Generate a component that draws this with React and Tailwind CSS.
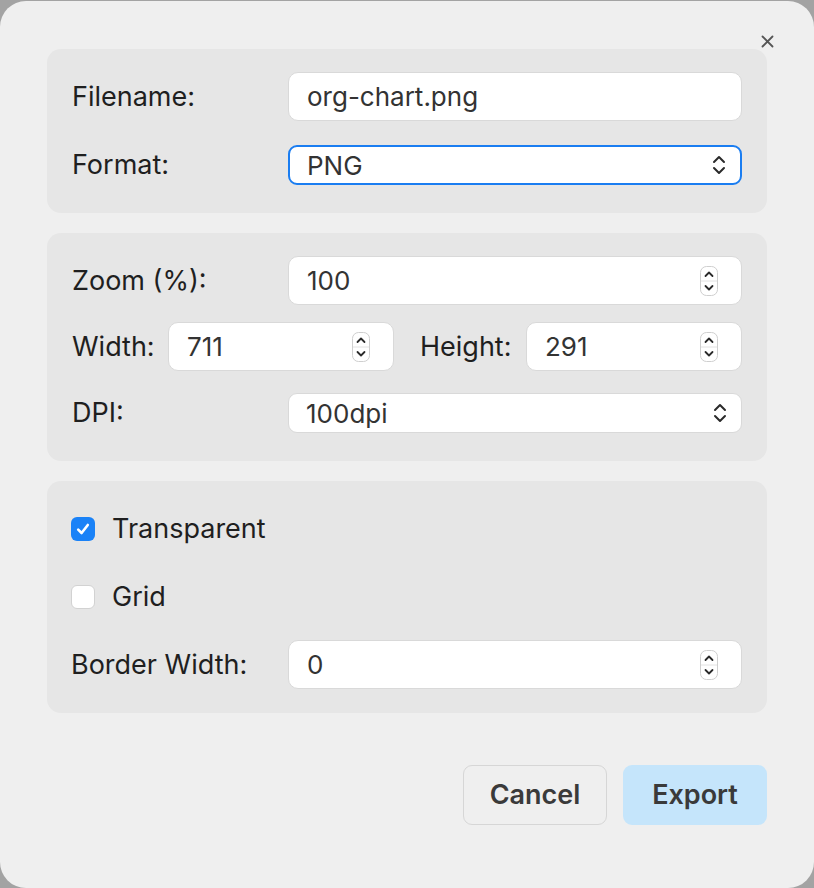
import { useState } from "react";

function Stepper() {
  return (
    <svg width="18" height="30" viewBox="0 0 18 30" className="shrink-0">
      <rect x="0.5" y="0.5" width="17" height="29" rx="6" fill="#fff" stroke="#cfcfcf" />
      <line x1="1" y1="15" x2="17" y2="15" stroke="#e2e2e2" />
      <path d="M5.5 10 L9 6.5 L12.5 10" fill="none" stroke="#2a2a2a" strokeWidth="1.8" strokeLinecap="round" strokeLinejoin="round" />
      <path d="M5.5 20 L9 23.5 L12.5 20" fill="none" stroke="#2a2a2a" strokeWidth="1.8" strokeLinecap="round" strokeLinejoin="round" />
    </svg>
  );
}

function SelectChevrons() {
  return (
    <svg width="16" height="22" viewBox="0 0 16 22" className="shrink-0">
      <path d="M3 8 L8 3 L13 8" fill="none" stroke="#2a2a2a" strokeWidth="2" strokeLinecap="round" strokeLinejoin="round" />
      <path d="M3 14 L8 19 L13 14" fill="none" stroke="#2a2a2a" strokeWidth="2" strokeLinecap="round" strokeLinejoin="round" />
    </svg>
  );
}

function Label({ children, className = "" }) {
  return (
    <span className={`text-[27px] leading-[36px] text-[#1f1f1f] ${className}`}>
      {children}
    </span>
  );
}

function NumberField({ value, className = "" }) {
  return (
    <div
      className={`h-[49px] flex items-center justify-between pl-[18px] pr-[23px] bg-white border border-[#d9d9d9] rounded-[10px] ${className}`}
    >
      <span className="text-[26px] text-[#333]">{value}</span>
      <Stepper />
    </div>
  );
}

function SelectField({ value, focused }) {
  return (
    <div
      className={`flex-1 h-[40px] flex items-center justify-between pl-[17px] pr-[13px] bg-white rounded-[9px] ${
        focused ? "border-2 border-[#1a7df1]" : "border border-[#d9d9d9]"
      }`}
    >
      <span className="text-[26px] text-[#333]">{value}</span>
      <SelectChevrons />
    </div>
  );
}

function Checkbox({ checked, onChange, label }) {
  return (
    <label className="flex items-center gap-[17px] cursor-pointer" onClick={onChange}>
      {checked ? (
        <span className="w-[24px] h-[24px] rounded-[6px] bg-[#1a82f7] flex items-center justify-center">
          <svg width="16" height="16" viewBox="0 0 16 16">
            <path d="M3.2 8.6 L6.6 12 L12.8 4" fill="none" stroke="#fff" strokeWidth="2.6" strokeLinecap="round" strokeLinejoin="round" />
          </svg>
        </span>
      ) : (
        <span className="w-[24px] h-[24px] rounded-[6px] bg-white border border-[#d2d2d2]" />
      )}
      <Label>{label}</Label>
    </label>
  );
}

export default function App() {
  const [transparent, setTransparent] = useState(true);
  const [grid, setGrid] = useState(false);

  return (
    <div
      className="w-[814px] h-[888px] bg-[#a3a3a3] pt-px"
      style={{ fontFamily: "Inter, 'Noto Sans', sans-serif" }}
    >
      <div className="h-[887px] bg-[#efefef] rounded-[26px] flex flex-col px-[47px] pt-[48px]">
        {/* CLOSE */}
        <button className="absolute left-[761px] top-[35px] w-[13px] h-[13px]">
          <svg width="13" height="13" viewBox="0 0 13 13">
            <path d="M1.5 1.5 L11.5 11.5 M11.5 1.5 L1.5 11.5" stroke="#555" strokeWidth="1.8" strokeLinecap="round" />
          </svg>
        </button>

        {/* FILE */}
        <div className="bg-[#e6e6e6] rounded-[14px] pl-[25px] pr-[25px] pt-[23px] pb-[28px] flex flex-col gap-[24px]">
          <div className="flex items-center">
            <Label className="w-[216px]">Filename:</Label>
            <div className="flex-1 h-[49px] flex items-center pl-[18px] bg-white border border-[#d9d9d9] rounded-[10px]">
              <span className="text-[26px] text-[#333]">org-chart.png</span>
            </div>
          </div>
          <div className="flex items-center">
            <Label className="w-[216px]">Format:</Label>
            <SelectField value="PNG" focused />
          </div>
        </div>

        {/* SIZE */}
        <div className="mt-[20px] bg-[#e6e6e6] rounded-[14px] pl-[25px] pr-[25px] pt-[23px] pb-[28px] flex flex-col">
          <div className="flex items-center">
            <Label className="w-[216px]">Zoom (%):</Label>
            <NumberField value="100" className="flex-1" />
          </div>
          <div className="flex items-center mt-[17px]">
            <Label className="w-[96px]">Width:</Label>
            <NumberField value="711" className="w-[226px]" />
            <Label className="ml-[26px] w-[106px]">Height:</Label>
            <NumberField value="291" className="flex-1" />
          </div>
          <div className="flex items-center mt-[22px]">
            <Label className="w-[216px]">DPI:</Label>
            <SelectField value="100dpi" />
          </div>
        </div>

        {/* OPTIONS */}
        <div className="mt-[20px] bg-[#e6e6e6] rounded-[14px] pl-[24px] pr-[25px] pt-[30px] pb-[24px] flex flex-col">
          <Checkbox checked={transparent} onChange={() => setTransparent(!transparent)} label="Transparent" />
          <div className="mt-[32px]">
            <Checkbox checked={grid} onChange={() => setGrid(!grid)} label="Grid" />
          </div>
          <div className="flex items-center mt-[25px]">
            <Label className="w-[217px]">Border Width:</Label>
            <NumberField value="0" className="flex-1" />
          </div>
        </div>

        {/* ACTIONS */}
        <div className="mt-[52px] flex justify-end gap-[16px]">
          <button className="w-[144px] h-[60px] rounded-[9px] border border-[#d6d6d6] bg-[#efefef] text-[27px] font-semibold text-[#3a3a3a]">
            Cancel
          </button>
          <button className="w-[144px] h-[60px] rounded-[9px] bg-[#c5e5fb] text-[27px] font-semibold text-[#3a3a3a]">
            Export
          </button>
        </div>
      </div>
    </div>
  );
}
